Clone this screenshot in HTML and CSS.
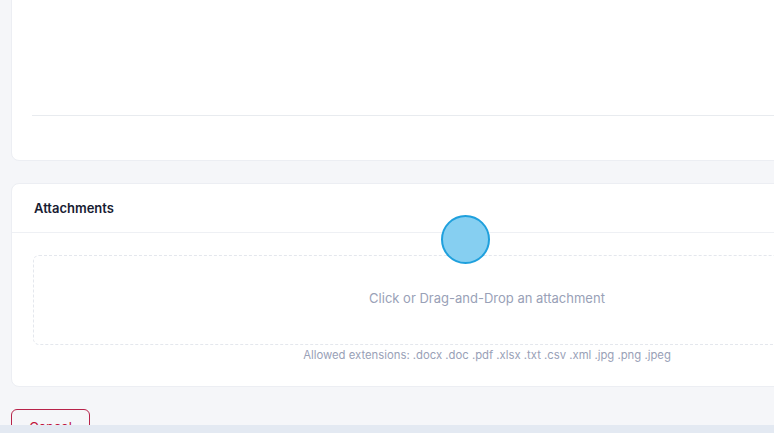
FILE: index.html
```html
<!DOCTYPE html>
<html lang="en">
<head>
    <meta charset="UTF-8" />
    <meta name="viewport" content="width=device-width, initial-scale=1">
    <title>New Ticket – Attachments</title>
    <link rel="stylesheet" href="styles.css">
</head>
<body>
    <div class="page">
        <!-- Editor card (scrolled, only the bottom is visible) -->
        <div class="card editor-card">
            <div class="editor-body"></div>
            <div class="editor-footer"></div>
        </div>

        <!-- Attachments -->
        <div class="card">
            <div class="card-header">
                <h3>Attachments</h3>
            </div>
            <div class="card-body">
                <div class="dropzone">Click or Drag-and-Drop an attachment</div>
                <p class="hint">Allowed extensions: .docx .doc .pdf .xlsx .txt .csv .xml .jpg .png .jpeg</p>
            </div>
        </div>

        <div class="actions">
            <button class="btn-cancel">Cancel</button>
        </div>
    </div>

    <div class="cursor-dot"></div>
    <div class="bottom-bar"></div>
</body>
</html>
```
FILE: styles.css
```css
* { box-sizing: border-box; }
body {
    margin: 0;
    background: #f5f6f9;
    font-family: 'Inter', 'Liberation Sans', sans-serif;
    color: #181c32;
    overflow: hidden;
    height: 433px;
}
.page {
    width: 963px;
    padding-left: 11px;
}
.card {
    background: #fff;
    border: 1px solid #eceef3;
    border-radius: 8px;
    margin-bottom: 22px;
}
.editor-card {
    margin-top: -12px;
    padding: 0 20px;
}
.editor-body {
    height: 127px;
    border-bottom: 1px solid #e8ebef;
}
.editor-footer {
    height: 44px;
}
.card-header {
    height: 49px;
    padding: 0 22px;
    display: flex;
    align-items: center;
    border-bottom: 1px solid #eef0f4;
}
.card-header h3 {
    margin: 0;
    font-size: 13px;
    font-weight: 600;
    color: #181c32;
}
.card-body {
    padding: 22px 21px 24px;
}
.dropzone {
    height: 90px;
    padding-bottom: 4px;
    border: 1px dashed #e4e7ed;
    border-radius: 6px;
    display: flex;
    align-items: center;
    justify-content: center;
    font-size: 13px;
    color: #99a1b7;
}
.hint {
    margin: 3px 0 0;
    text-align: center;
    font-size: 11.3px;
    color: #99a1b7;
}
.actions {
    display: flex;
}
.btn-cancel {
    width: 79px;
    height: 36px;
    padding: 0;
    background: transparent;
    border: 1px solid #b8234a;
    border-radius: 6px;
    color: #c0143c;
    font-family: inherit;
    font-size: 13px;
}
.cursor-dot {
    position: absolute;
    left: 441px;
    top: 215px;
    width: 49px;
    height: 49px;
    border-radius: 50%;
    background: #86cff1;
    border: 2px solid #1fa0dd;
}
.bottom-bar {
    position: fixed;
    left: 0;
    right: 0;
    bottom: 0;
    height: 8px;
    background: #e3e9f2;
}
```
